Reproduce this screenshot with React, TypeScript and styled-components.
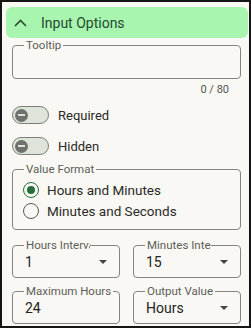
import React from "react";
import styled, { createGlobalStyle } from "styled-components";

const Global = createGlobalStyle`
  html, body { margin: 0; padding: 0; background: #f9f8f4; }
  * { box-sizing: border-box; }
`;

const Frame = styled.div`
  width: 251px;
  height: 328px;
  border: 2px solid #151515;
  background: #f9f8f4;
  padding: 5px 1px 0 4px;
  font-family: Roboto, "Liberation Sans", sans-serif;
  overflow: hidden;
`;

const Header = styled.div`
  height: 31px;
  background: #a8f5b0;
  border-radius: 6px;
  display: flex;
  align-items: center;
  padding-left: 8px;
  gap: 14px;
  color: #244a2f;
  font-size: 14px;
`;

const Body = styled.div`
  padding: 1px 7px 0 6px;
  display: flex;
  flex-direction: column;
`;

const Fieldset = styled.fieldset<{ $h: number; $mt?: number }>`
  margin: ${(p) => p.$mt ?? 0}px 0 0 0;
  height: ${(p) => p.$h}px;
  border: 1px solid #85857f;
  border-radius: 4px;
  padding: 0 10px 0 12px;
  min-width: 0;
`;

const Legend = styled.legend<{ $max?: number }>`
  padding: 0 2px;
  margin-left: -1px;
  font-size: 11.5px;
  color: #5d5d58;
  line-height: 12px;
  white-space: nowrap;
  overflow: hidden;
  max-width: ${(p) => (p.$max ? `${p.$max}px` : "none")};
`;

const Counter = styled.div`
  text-align: right;
  padding-right: 12px;
  font-size: 11px;
  color: #55554f;
  margin-top: 4px;
  line-height: 13px;
`;

const SwitchRow = styled.div<{ $mt: number }>`
  display: flex;
  align-items: center;
  gap: 9px;
  margin-top: ${(p) => p.$mt}px;
  font-size: 13px;
  color: #2a2a27;
`;

const Track = styled.div`
  width: 37px;
  height: 18px;
  border: 1.5px solid #7b7f78;
  border-radius: 9px;
  background: #dee4da;
  display: flex;
  align-items: center;
  padding-left: 1.5px;
`;

const Thumb = styled.div`
  width: 13px;
  height: 13px;
  border-radius: 50%;
  background: #6e726c;
  display: flex;
  align-items: center;
  justify-content: center;
  &::after {
    content: "";
    width: 7px;
    height: 2px;
    background: #dee4da;
  }
`;

const RadioList = styled.div`
  display: flex;
  flex-direction: column;
  gap: 5px;
  padding-top: 7px;
  margin-left: -2px;
`;

const RadioRow = styled.div`
  display: flex;
  align-items: center;
  gap: 8px;
  font-size: 13.5px;
  color: #2a2a27;
  height: 16px;
`;

const RadioCircle = styled.div<{ $on?: boolean }>`
  width: 16px;
  height: 16px;
  border-radius: 50%;
  border: 1.7px solid ${(p) => (p.$on ? "#24703a" : "#5a5a55")};
  display: flex;
  align-items: center;
  justify-content: center;
  &::after {
    content: "";
    width: 8px;
    height: 8px;
    border-radius: 50%;
    background: ${(p) => (p.$on ? "#24703a" : "transparent")};
  }
`;

const Grid = styled.div`
  display: grid;
  grid-template-columns: 108px 108px;
  column-gap: 13px;
  row-gap: 7px;
  margin-top: 9px;
`;

const Value = styled.div`
  display: flex;
  align-items: center;
  justify-content: space-between;
  font-size: 14px;
  color: #242421;
  margin-top: 3px;
  padding-right: 1px;
`;

const Arrow = styled.div`
  width: 0;
  height: 0;
  border-left: 4.5px solid transparent;
  border-right: 4.5px solid transparent;
  border-top: 4.5px solid #45453f;
  margin-right: 1px;
`;

const Field = ({ label, value, select, max }: { label: string; value: string; select?: boolean; max?: number }) => (
  <Fieldset $h={39}>
    <Legend $max={max}>{label}</Legend>
    <Value>
      <span>{value}</span>
      {select && <Arrow />}
    </Value>
  </Fieldset>
);

export default function App() {
  return (
    <>
      <Global />
      <Frame>
        <Header>
          <svg width="13" height="8" viewBox="0 0 13 8">
            <path d="M1 7 L6.5 1.5 L12 7" fill="none" stroke="#2b4a33" strokeWidth="1.6" />
          </svg>
          <span>Input Options</span>
        </Header>
        <Body>
          <Fieldset $h={40}>
            <Legend>Tooltip</Legend>
          </Fieldset>
          <Counter>0 / 80</Counter>
          <SwitchRow $mt={10}>
            <Track><Thumb /></Track>
            <span>Required</span>
          </SwitchRow>
          <SwitchRow $mt={13}>
            <Track><Thumb /></Track>
            <span>Hidden</span>
          </SwitchRow>
          <Fieldset $h={67} $mt={8}>
            <Legend>Value Format</Legend>
            <RadioList>
              <RadioRow><RadioCircle $on /><span>Hours and Minutes</span></RadioRow>
              <RadioRow><RadioCircle /><span>Minutes and Seconds</span></RadioRow>
            </RadioList>
          </Fieldset>
          <Grid>
            <Field label="Hours Interval" value="1" select max={66} />
            <Field label="Minutes Interval" value="15" select max={66} />
            <Field label="Maximum Hours" value="24" />
            <Field label="Output Value" value="Hours" select />
          </Grid>
        </Body>
      </Frame>
    </>
  );
}
